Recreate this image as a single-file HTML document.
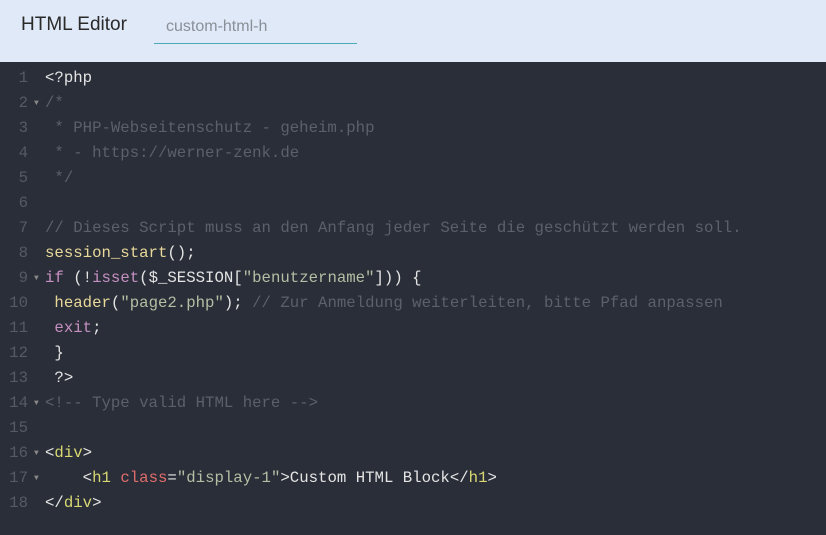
<!DOCTYPE html>
<html><head><style>
body{margin:0;width:826px;height:535px;background:#2a2e38;overflow:hidden}
.hd{height:62px;background:#e0e9f8;position:relative;font-family:"Liberation Sans",sans-serif}
.t{position:absolute;left:21px;top:14px;font-size:19px;color:#2a2a2a}
.in{position:absolute;left:154px;top:17px;width:203px;height:27px;border-bottom:1px solid #4aa8b8;font-size:16px;color:#8a8f98;padding-left:12px;padding-top:1px;box-sizing:border-box}
.ed{font-family:"Liberation Mono",monospace;font-size:15.7px;color:#e4e4e4;padding-top:4px}
.l{height:25px;line-height:25px;position:relative;white-space:pre}
.n{position:absolute;left:0;width:28px;text-align:right;color:#555a66}
.a{position:absolute;left:34px;font-size:8px;color:#888}
.c{position:absolute;left:45px}
.cm{color:#5a606c}.f{color:#e8d89a}.s{color:#b3bfa4}.k{color:#c690c2}.tg{color:#d8d873}.at{color:#e06c6c}
</style></head><body>
<div class="hd"><div class="t">HTML Editor</div><div class="in">custom-html-h</div></div>
<div class="ed">
<div class="l"><span class="n">1</span><span class="c">&lt;?php</span></div>
<div class="l"><span class="n">2</span><span class="a">▼</span><span class="c cm">/*</span></div>
<div class="l"><span class="n">3</span><span class="c cm"> * PHP-Webseitenschutz - geheim.php</span></div>
<div class="l"><span class="n">4</span><span class="c cm"> * - https://werner-zenk.de</span></div>
<div class="l"><span class="n">5</span><span class="c cm"> */</span></div>
<div class="l"><span class="n">6</span></div>
<div class="l"><span class="n">7</span><span class="c cm">// Dieses Script muss an den Anfang jeder Seite die geschützt werden soll.</span></div>
<div class="l"><span class="n">8</span><span class="c"><span class="f">session_start</span>();</span></div>
<div class="l"><span class="n">9</span><span class="a">▼</span><span class="c"><span class="k">if</span> (!<span class="k">isset</span>($_SESSION[<span class="s">"benutzername"</span>])) {</span></div>
<div class="l"><span class="n">10</span><span class="c"> <span class="f">header</span>(<span class="s">"page2.php"</span>); <span class="cm">// Zur Anmeldung weiterleiten, bitte Pfad anpassen</span></span></div>
<div class="l"><span class="n">11</span><span class="c"> <span class="k">exit</span>;</span></div>
<div class="l"><span class="n">12</span><span class="c"> }</span></div>
<div class="l"><span class="n">13</span><span class="c"> ?&gt;</span></div>
<div class="l"><span class="n">14</span><span class="a">▼</span><span class="c cm">&lt;!-- Type valid HTML here --&gt;</span></div>
<div class="l"><span class="n">15</span></div>
<div class="l"><span class="n">16</span><span class="a">▼</span><span class="c">&lt;<span class="tg">div</span>&gt;</span></div>
<div class="l"><span class="n">17</span><span class="a">▼</span><span class="c">    &lt;<span class="tg">h1</span> <span class="at">class</span>=<span class="s">"display-1"</span>&gt;Custom HTML Block&lt;/<span class="tg">h1</span>&gt;</span></div>
<div class="l"><span class="n">18</span><span class="c">&lt;/<span class="tg">div</span>&gt;</span></div>
</div>
</body></html>
